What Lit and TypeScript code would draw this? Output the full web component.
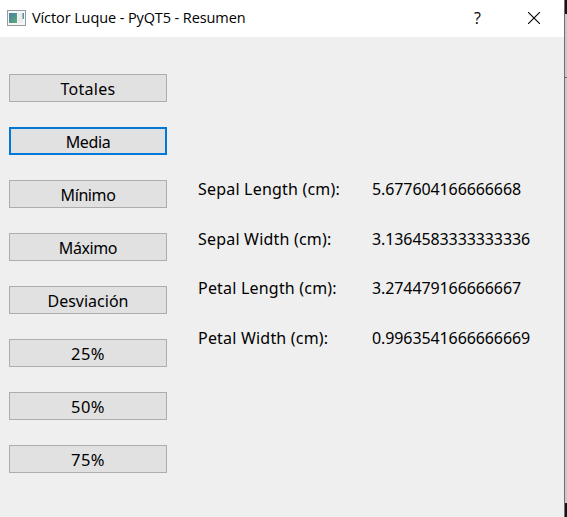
import { LitElement, html, css } from "lit";
import { customElement, state } from "lit/decorators.js";

const ACTIONS = [
  { name: "Totales", tone: "loose" },
  { name: "Media", tone: "tight" },
  { name: "Mínimo", tone: "tight" },
  { name: "Máximo", tone: "tight" },
  { name: "Desviación", tone: "" },
  { name: "25%", tone: "percent" },
  { name: "50%", tone: "percent" },
  { name: "75%", tone: "percent" },
];

const ROWS = [
  ["Sepal Length (cm):", "5.677604166666668"],
  ["Sepal Width (cm):", "3.1364583333333336"],
  ["Petal Length (cm):", "3.274479166666667"],
  ["Petal Width (cm):", "0.9963541666666669"],
];

@customElement("app-root")
export class AppRoot extends LitElement {
  static styles = css`
    :host {
      display: grid;
      grid-template-columns: 564px 1px 2px;
      width: 567px;
      height: 517px;
      overflow: hidden;
      color: #000;
      font-family: "Noto Sans", "Open Sans", sans-serif;
    }
    .window {
      display: flex;
      flex-direction: column;
      background: #efefef;
    }
    .edge {
      background: #707070;
    }
    .desktop {
      display: grid;
      grid-template-rows: 14px 63px 1px 425px 14px;
    }
    .dark {
      background: #141414;
    }
    .panel {
      background: #c9c9c9;
    }
    .rule {
      background: #686868;
    }
    .titlebar {
      display: flex;
      align-items: center;
      height: 37px;
      background: #fff;
    }
    .app-icon {
      margin: 0 6px 2px 7px;
      flex: none;
    }
    .title {
      flex: 1;
      padding-bottom: 1px;
      font-family: "Open Sans", sans-serif;
      font-size: 14.5px;
      letter-spacing: -0.1px;
      line-height: 20px;
      white-space: nowrap;
    }
    .caption {
      display: flex;
      align-items: center;
      justify-content: center;
      width: 57px;
      height: 37px;
      padding: 0 2px 2px 0;
      box-sizing: border-box;
      border: 0;
      background: none;
      font: 16px "Open Sans", sans-serif;
      color: #000;
    }
    .caption.close {
      padding: 0 4px 1px 0;
    }
    .body {
      display: flex;
    }
    .actions {
      display: flex;
      flex-direction: column;
      gap: 25px;
      padding: 37px 0 0 9px;
    }
    .action {
      box-sizing: border-box;
      width: 158px;
      height: 28px;
      padding: 2px 0 0;
      border: 1px solid #adadad;
      background: #e1e1e1;
      font: 16px/24px "Noto Sans", sans-serif;
      color: #000;
      text-align: center;
    }
    .action.current {
      border: 2px solid #0078d7;
      padding-top: 1px;
    }
    .loose {
      letter-spacing: 0.3px;
    }
    .tight {
      letter-spacing: -0.4px;
    }
    .percent {
      font-size: 16.5px;
      letter-spacing: 0.4px;
    }
    .results {
      display: grid;
      grid-template-columns: 174px auto;
      grid-template-rows: 50px 50px 48px 52px;
      align-content: start;
      align-items: center;
      padding: 127px 0 0 31px;
      font-size: 16px;
      line-height: 22px;
      white-space: nowrap;
    }
    .label {
      letter-spacing: 0.2px;
    }
    .value {
      letter-spacing: -0.1px;
    }
  `;

  @state() private current = "Media";

  render() {
    return html`
      <div class="window">
        <div class="titlebar">
          <svg class="app-icon" width="19" height="16" viewBox="0 0 19 16">
            <defs>
              <linearGradient id="g" x1="0" y1="0" x2="1" y2="1">
                <stop offset="0" stop-color="#4a7fa8" />
                <stop offset="1" stop-color="#5cab75" />
              </linearGradient>
            </defs>
            <rect x=".5" y=".5" width="18" height="15" fill="#f7f7f7" stroke="#969ba2" />
            <rect x="2" y="3" width="8" height="10" fill="url(#g)" />
            <rect x="11" y="3" width="5" height="10" fill="#ededed" />
            <rect x="15.5" y="3" width="1.5" height="6" fill="url(#g)" />
          </svg>
          <div class="title">Víctor Luque - PyQT5 - Resumen</div>
          <button class="caption" aria-label="Help">?</button>
          <button class="caption close" aria-label="Close">
            <svg width="12" height="12" viewBox="0 0 12 12" stroke="#000" stroke-width="1.1">
              <path d="M0 0L12 12M12 0L0 12" />
            </svg>
          </button>
        </div>
        <div class="body">
          <div class="actions">
            ${ACTIONS.map(
              ({ name, tone }) => html`<button
                class="action ${tone} ${name === this.current ? "current" : ""}"
                @click=${() => (this.current = name)}
              >${name}</button>`
            )}
          </div>
          <div class="results">
            ${ROWS.map(
              ([label, value]) =>
                html`<span class="label">${label}</span><span class="value">${value}</span>`
            )}
          </div>
        </div>
      </div>
      <div class="edge"></div>
      <div class="desktop">
        <div class="dark"></div>
        <div class="panel"></div>
        <div class="rule"></div>
        <div class="panel"></div>
        <div class="dark"></div>
      </div>
    `;
  }
}
